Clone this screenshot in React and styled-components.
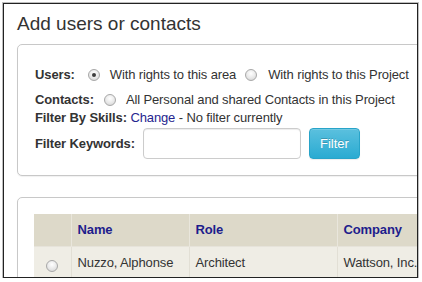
import React from "react";
import styled, { createGlobalStyle } from "styled-components";

const GlobalStyle = createGlobalStyle`
  html, body {
    margin: 0;
    padding: 0;
    background: #fff;
  }
  body {
    font-family: "Liberation Sans", Arial, sans-serif;
    font-size: 13px;
    color: #333;
  }
`;

const Frame = styled.div`
  box-sizing: border-box;
  margin: 3px 0 0 3px;
  width: 415px;
  height: 275px;
  border: 1px solid #222;
  box-shadow: 0 0 0 1px rgba(0, 0, 0, 0.25);
  background: #fff;
  overflow: hidden;
  padding: 9px 0 0 13px;
`;

const Title = styled.h1`
  margin: 0;
  font-size: 19px;
  line-height: 22px;
  font-weight: normal;
  color: #333;
  white-space: nowrap;
`;

const Panel = styled.div`
  box-sizing: border-box;
  width: 470px;
  margin-top: ${p => p.$top}px;
  border: 1px solid #c8c8c8;
  border-radius: 5px;
  background: #fff;
  box-shadow: 0 1px 1px rgba(0, 0, 0, 0.06);
  padding: ${p => p.$pad};
  letter-spacing: -0.12px;
`;

const Row = styled.div`
  display: flex;
  align-items: center;
  height: ${p => p.$h || 18}px;
  line-height: 18px;
  margin-top: ${p => p.$mt || 0}px;
  white-space: nowrap;
`;

const Label = styled.b`
  font-weight: bold;
  color: #333;
`;

const Radio = styled.span`
  position: relative;
  display: inline-block;
  box-sizing: border-box;
  flex-shrink: 0;
  width: 12px;
  height: 12px;
  border-radius: 50%;
  border: 1px solid #a8a8a8;
  background: radial-gradient(circle at 50% 35%, #ffffff 0%, #e8e8e8 55%, #cfcfcf 100%);
  vertical-align: middle;
  margin: 0 ${p => (p.$after ?? 10)}px 0 ${p => p.$before ?? 0}px;

  &::after {
    content: "";
    display: ${p => (p.$checked ? "block" : "none")};
    position: absolute;
    left: 50%;
    top: 50%;
    width: 4px;
    height: 4px;
    margin: -2px 0 0 -2px;
    border-radius: 50%;
    background: #3d3d3d;
  }
`;

const Link = styled.a`
  color: #25258f;
  text-decoration: none;
  cursor: pointer;
`;

const Input = styled.input`
  box-sizing: border-box;
  width: 158px;
  height: 31px;
  margin-left: 8px;
  border: 1px solid #ccc;
  border-radius: 4px;
  box-shadow: inset 0 1px 1px rgba(0, 0, 0, 0.075);
  padding: 4px 8px;
  font: inherit;
  outline: none;
`;

const FilterButton = styled.button`
  box-sizing: border-box;
  width: 51px;
  height: 31px;
  margin-left: 8px;
  border: 1px solid #28a4c9;
  border-radius: 4px;
  background: linear-gradient(to bottom, #5bc0de 0%, #2aabd2 100%);
  color: #fff;
  font-family: "Liberation Sans", Arial, sans-serif;
  font-size: 13px;
  text-shadow: 0 -1px 0 rgba(0, 0, 0, 0.2);
  box-shadow: inset 0 1px 0 rgba(255, 255, 255, 0.15), 0 1px 1px rgba(0, 0, 0, 0.075);
  cursor: pointer;
  padding: 0;
`;

const Table = styled.table`
  border-collapse: collapse;
  table-layout: fixed;
  width: 520px;
`;

const Th = styled.th`
  height: 31px;
  padding: 0 6px 1px;
  background: #ddd9c9;
  color: #1d1d8c;
  font-weight: bold;
  text-align: left;
  border-left: 1px solid #e9e6dc;
  &:first-child {
    border-left: none;
  }
`;

const Td = styled.td`
  height: 30px;
  padding: 0 6px 4px;
  background: #efede5;
  color: #333;
  border-left: 1px solid #e2dfd5;
  border-top: 1px solid #e6e3da;
  white-space: nowrap;
  &:first-child {
    border-left: none;
    text-align: center;
    padding: 2px 0 0;
  }
`;

const columns = [
  { key: "pick", label: "", width: 37 },
  { key: "name", label: "Name", width: 118 },
  { key: "role", label: "Role", width: 148 },
  { key: "company", label: "Company", width: 217 }
];

const people = [{ name: "Nuzzo, Alphonse", role: "Architect", company: "Wattson, Inc." }];

export default function App() {
  return (
    <>
      <GlobalStyle />
      <Frame>
        <Title>Add users or contacts</Title>

        <Panel $top={9} $pad="21px 17px 16px">
          <Row>
            <Label>Users:</Label>
            <Radio $checked $before={13} />
            <span>With rights to this area</span>
            <Radio $before={9} $after={11} />
            <span>With rights to this Project</span>
          </Row>
          <Row $mt={7}>
            <Label>Contacts:</Label>
            <Radio $before={10} />
            <span>All Personal and shared Contacts in this Project</span>
          </Row>
          <Row>
            <Label>Filter By Skills:</Label>
            &nbsp;<Link>Change</Link>&nbsp;- No filter currently
          </Row>
          <Row $h={31} $mt={1}>
            <Label>Filter Keywords:</Label>
            <Input type="text" />
            <FilterButton>Filter</FilterButton>
          </Row>
        </Panel>

        <Panel $top={21} $pad="16px 16px 40px">
          <Table>
            <colgroup>
              {columns.map(c => (
                <col key={c.key} style={{ width: c.width }} />
              ))}
            </colgroup>
            <thead>
              <tr>
                {columns.map(c => (
                  <Th key={c.key}>{c.label}</Th>
                ))}
              </tr>
            </thead>
            <tbody>
              {people.map(p => (
                <tr key={p.name}>
                  <Td>
                    <Radio $after={0} />
                  </Td>
                  <Td>{p.name}</Td>
                  <Td>{p.role}</Td>
                  <Td>{p.company}</Td>
                </tr>
              ))}
            </tbody>
          </Table>
        </Panel>
      </Frame>
    </>
  );
}
